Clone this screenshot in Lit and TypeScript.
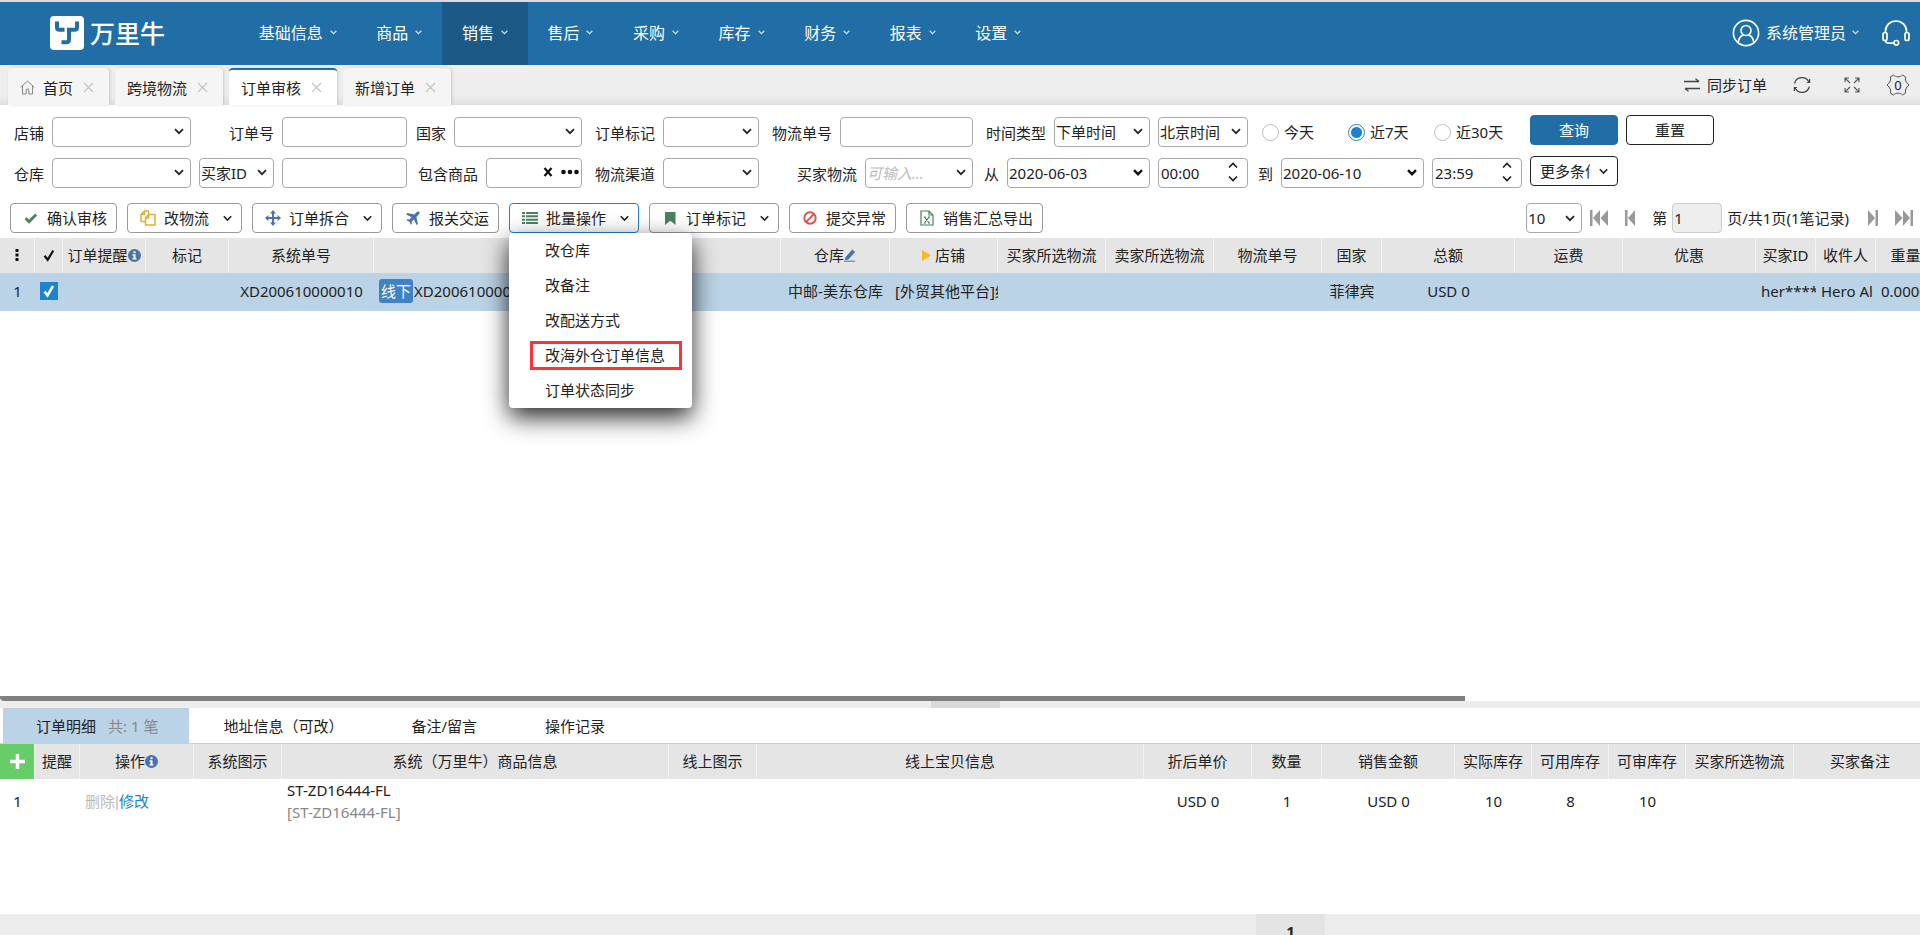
import { LitElement, html, css, svg, nothing, unsafeCSS } from "lit";
import { customElement, property } from "lit/decorators.js";
import { classMap } from "lit/directives/class-map.js";
import { styleMap } from "lit/directives/style-map.js";

const chevronImage = (stroke: string, weight: number) =>
  unsafeCSS(
    `url("data:image/svg+xml,${encodeURIComponent(
      `<svg xmlns='http://www.w3.org/2000/svg' width='10' height='7' viewBox='0 0 10 7'><path d='M1 1.2l4 4 4-4' fill='none' stroke='${stroke}' stroke-width='${weight}'/></svg>`
    )}")`
  );

const spinImage = unsafeCSS(
  `url("data:image/svg+xml,${encodeURIComponent(
    `<svg xmlns='http://www.w3.org/2000/svg' width='10' height='20' viewBox='0 0 10 20'><path d='M1 5.5l4-4 4 4M1 14.5l4 4 4-4' fill='none' stroke='#222' stroke-width='1.7'/></svg>`
  )}")`
);

const icons: Record<string, unknown> = {
  check: svg`<svg width="16" height="16" viewBox="0 0 16 16"><path d="M2.5 8.2l3.6 3.6 7-7.3" fill="none" stroke="#4c8161" stroke-width="2.8"/></svg>`,
  copy: svg`<svg width="16" height="16" viewBox="0 0 16 16"><path d="M4.5 1h4v3M1 4.600L4.500 1v3.600H1v6.900h4.500M8.500 4.500H15V15H5.500V8zM8.500 4.500V8h-3M8.500 1v2" fill="none" stroke="#dfae35" stroke-width="1.500" stroke-linejoin="round"/></svg>`,
  move: svg`<svg width="16" height="16" viewBox="0 0 16 16"><path d="M8 0l3 3.400H9v3.600h3.600V5L16 8l-3.400 3V9H9v3.600h2L8 16l-3-3.400h2V9H3.400v2L0 8l3.400-3v2H7V3.400H5z" fill="#4a72b0"/></svg>`,
  plane: svg`<svg width="16" height="16" viewBox="0 0 16 16"><path d="M14.200 1.800c.7.700.3 2-.5 2.800L11.400 7l1.500 7-1.300 1.100-2.700-5.500-2.300 2.200.4 2-1 1-1.600-3-3-1.600 1-1 2 .4 2.200-2.300L1.200 4.400 2.300 3l7 1.500 2.300-2.300c.8-.8 2-1.100 2.600-.4z" fill="#4a72b0"/></svg>`,
  list: svg`<svg width="16" height="16" viewBox="0 0 16 16"><path d="M0 2h3v2H0zM4 2h12v2H4zM0 5.300h3v2H0zM4 5.300h12v2H4zM0 8.700h3v2H0zM4 8.700h12v2H4zM0 12h3v2H0zM4 12h12v2H4z" fill="#4c8161"/></svg>`,
  bookmark: svg`<svg width="16" height="16" viewBox="0 0 16 16"><path d="M3 2h10.500v13l-5.200-4.300L3 15z" fill="#4c8161"/></svg>`,
  ban: svg`<svg width="16" height="16" viewBox="0 0 16 16"><circle cx="8" cy="8" r="5.700" fill="none" stroke="#d9534a" stroke-width="1.900"/><path d="M4.200 11.800l7.600-7.600" stroke="#d9534a" stroke-width="1.900"/></svg>`,
  excel: svg`<svg width="16" height="16" viewBox="0 0 16 16"><path d="M2 1h8l4 4v10H2zM10 1v4h4M5.500 7l4.600 6M10.100 7l-4.600 6M4.700 7h2M9 7h2M4.700 13h2M9 13h2" fill="none" stroke="#4c8161" stroke-width="1.200"/></svg>`,
  info: svg`<svg width="13" height="13" viewBox="0 0 13 13"><circle cx="6.500" cy="6.500" r="6.500" fill="#4a72b0"/><path d="M5.500 2.200h2v2h-2zM4.500 5.200h3v4h1v1.400h-4V9.200h1V6.600h-1z" fill="#fff"/></svg>`,
  pen: svg`<svg width="12" height="14" viewBox="0 0 12 14"><path d="M1.500 9.200L8.300 1.500l2.800 2.500-6.700 7.500-3.400.8z" fill="#4a72b0"/><path d="M0 13.200h11" stroke="#4a72b0" stroke-width="1"/></svg>`,
  triangle: svg`<svg width="9" height="11" viewBox="0 0 9 11"><path d="M0 0l9 5.500L0 11z" fill="#fbb829"/></svg>`,
  tick: svg`<svg width="12" height="13" viewBox="0 0 12 13"><path d="M1.500 6.800l3.200 4 5.600-9.300" fill="none" stroke="#111" stroke-width="2.200"/></svg>`,
  dots: svg`<svg width="4" height="14" viewBox="0 0 4 14"><path d="M.5 1h3v3h-3zM.5 5.500h3v3h-3zM.5 10h3v3h-3z" fill="#111"/></svg>`,
  home: svg`<svg width="15" height="15" viewBox="0 0 15 15"><path d="M.7 7.300L7.500 1l6.800 6.300M2.500 6v8h3.700V9.200h2.600V14h3.700V6" fill="none" stroke="#888"/></svg>`,
  close: svg`<svg width="11" height="11" viewBox="0 0 11 11"><path d="M1 1l9 9M10 1l-9 9" stroke="#c4c4c4" stroke-width="1.200"/></svg>`,
  swap: svg`<svg width="16" height="14" viewBox="0 0 16 14"><path d="M0 3.500h15M11.500.8l3.500 2.700M16 10.500H1M4.500 13.200L1 10.500" fill="none" stroke="#444" stroke-width="1.300"/></svg>`,
  refresh: svg`<svg width="18" height="18" viewBox="0 0 18 18"><path d="M1.600 7.500A7.600 7.600 0 0 1 16 6.200M16.400 10.500A7.600 7.600 0 0 1 2 11.800M16.600 3v3.500h-2.500M1.400 15v-3.500h2.500" fill="none" stroke="#444" stroke-width="1.200"/></svg>`,
  expand: svg`<svg width="16" height="16" viewBox="0 0 16 16"><path d="M6 6L1 1M1 5V1h4M10 6l5-5M11 1h4v4M6 10l-5 5M1 11v4h4M10 10l5 5M15 11v4h-4" fill="none" stroke="#555" stroke-width="1.100"/></svg>`,
  user: svg`<svg width="28" height="28" viewBox="0 0 28 28"><g fill="none" stroke="#fff" stroke-width="1.600"><circle cx="14" cy="14" r="12.600"/><circle cx="14" cy="11.500" r="5"/><path d="M6.200 23.500c.6-4.600 3-7 5.600-7.600M21.800 23.500c-.6-4.600-3-7-5.600-7.600"/></g></svg>`,
  headset: svg`<svg width="28" height="26" viewBox="0 0 28 26"><g fill="none" stroke="#fff" stroke-width="1.700"><path d="M3.500 13V11a10.500 10 0 0 1 21 0v2"/><rect x="1" y="12.500" width="4" height="8" rx="2"/><rect x="23" y="12.500" width="4" height="8" rx="2"/><path d="M3.500 20.500c0 2.300 2 2.700 4 2.700h4.500"/><circle cx="14.300" cy="22.800" r="2.300"/></g></svg>`,
  logo: svg`<svg width="34" height="34" viewBox="0 0 34 34"><rect width="34" height="34" rx="4" fill="#fff"/><path d="M7 5.500V11.500Q7 13.800 9.500 13.800H14.500M27 5.500V11.500Q27 13.800 24.500 13.800H19V23.500Q19 26.200 16.500 26.200H11.500" fill="none" stroke="#216da6" stroke-width="4"/></svg>`,
  first: svg`<svg width="18" height="16" viewBox="0 0 18 16"><path d="M0 0h2.500v16H0zM10 0v16L3 8zM18 0v16l-7.500-8z" fill="#999"/></svg>`,
  prev: svg`<svg width="10" height="16" viewBox="0 0 10 16"><path d="M0 0h2.500v16H0zM10 0v16L3 8z" fill="#999"/></svg>`,
  next: svg`<svg width="10" height="16" viewBox="0 0 10 16"><path d="M7.500 0H10v16H7.500zM0 0v16l7-8z" fill="#999"/></svg>`,
  last: svg`<svg width="18" height="16" viewBox="0 0 18 16"><path d="M15.500 0H18v16h-2.500zM8 0v16l7-8zM0 0v16l7.500-8z" fill="#999"/></svg>`,
  plus: svg`<svg width="17" height="17" viewBox="0 0 17 17"><path d="M8.500 1v15M1 8.500h15" stroke="#fff" stroke-width="3.500"/></svg>`,
};

const chevron = (size: number, width: number) =>
  svg`<svg width=${size} height="7" viewBox="0 0 9 7"><path d="M.8 1.200l3.700 3.800 3.700-3.800" fill="none" stroke="currentColor" stroke-width=${width}/></svg>`;

const sharedText = css`
  :host {
    font-family: "Noto Sans", "Noto Sans CJK SC", sans-serif;
    font-size: 15px;
    line-height: 22px;
    color: #222;
  }
  * {
    box-sizing: border-box;
  }
  button,
  input,
  select {
    font: inherit;
    color: inherit;
    margin: 0;
  }
  button {
    padding: 0;
    border: 0;
    background: none;
    cursor: pointer;
  }
  svg {
    display: block;
    flex: none;
  }
`;

@customElement("top-nav")
class TopNav extends LitElement {
  static styles = [
    sharedText,
    css`
      :host {
        display: flex;
        align-items: stretch;
        height: 65px;
        border-top: 2px solid #d9dde3;
        background: #216da6;
        color: #fff;
        font-size: 16px;
      }
      .brand {
        display: flex;
        align-items: center;
        gap: 6px;
        width: 239px;
        padding-left: 50px;
        padding-bottom: 1px;
        font-size: 25px;
        font-weight: 500;
      }
      nav {
        display: flex;
        width: 802px;
      }
      .item {
        flex: 1 1 auto;
        display: flex;
        align-items: center;
        justify-content: center;
        gap: 7px;
        padding: 0 19px 2px;
        color: #fff;
        text-decoration: none;
        white-space: nowrap;
      }
      .current {
        background: #1c5985;
      }
      .item svg,
      .account svg:last-child {
        opacity: 0.8;
      }
      .side {
        display: flex;
        align-items: center;
        gap: 23px;
        margin-left: auto;
        padding: 0 10px 2px 0;
      }
      .account {
        display: flex;
        align-items: center;
        gap: 6px;
      }
    `,
  ];
  render() {
    const items = ["基础信息", "商品", "销售", "售后", "采购", "库存", "财务", "报表", "设置"];
    return html`
      <div class="brand">${icons.logo}<span>万里牛</span></div>
      <nav>
        ${items.map(
          (name) => html`<a href="#" class=${classMap({ item: true, current: name === "销售" })}>${name}${chevron(7, 1.6)}</a>`
        )}
      </nav>
      <div class="side">
        <button class="account">${icons.user}<span>系统管理员</span>${chevron(7, 1.6)}</button>
        <button aria-label="客服">${icons.headset}</button>
      </div>
    `;
  }
}

@customElement("page-tabs")
class PageTabs extends LitElement {
  static styles = [
    sharedText,
    css`
      :host {
        display: flex;
        justify-content: space-between;
        height: 40px;
        padding: 3px 10px 0 8px;
        background: linear-gradient(#eeeeee 75%, #e0e0e0);
      }
      .tabs {
        display: flex;
        gap: 6px;
      }
      .tab {
        display: flex;
        align-items: center;
        gap: 10px;
        padding: 2px 15px 0 12px;
        border-radius: 4px 4px 0 0;
        background: #f5f5f5;
        box-shadow: 1px 0 3px rgba(0, 0, 0, 0.15);
      }
      .current {
        padding-top: 0;
        border-top: 2px solid #216da6;
        background: #fff;
      }
      .label {
        display: flex;
        align-items: center;
        gap: 8px;
      }
      .tools {
        display: flex;
        align-items: center;
        gap: 26px;
        padding-bottom: 3px;
      }
      .sync {
        display: flex;
        align-items: center;
        gap: 7px;
      }
      .full {
        margin-left: 7px;
      }
      .gear {
        display: grid;
        place-items: center;
      }
      .gear svg,
      .gear span {
        grid-area: 1 / 1;
      }
      .gear span {
        font-size: 13px;
      }
    `,
  ];
  render() {
    const tabs = ["首页", "跨境物流", "订单审核", "新增订单"];
    return html`
      <div class="tabs" role="tablist">
        ${tabs.map(
          (name, i) => html`<div class=${classMap({ tab: true, current: name === "订单审核" })} role="tab">
            <span class="label">${i === 0 ? icons.home : nothing}${name}</span>
            <button aria-label="关闭">${icons.close}</button>
          </div>`
        )}
      </div>
      <div class="tools">
        <button class="sync">${icons.swap}<span>同步订单</span></button>
        <button aria-label="刷新">${icons.refresh}</button>
        <button class="full" aria-label="全屏">${icons.expand}</button>
        <button class="gear" aria-label="设置">
          <svg width="24" height="22" viewBox="0 0 24 22">
            <path
              d="M7.500 1c2 2.400 7 2.400 9 0l3.200 2c-1 2.600.2 5.400 3.300 8-3.100 2.600-4.300 5.400-3.300 8l-3.200 2c-2-2.400-7-2.400-9 0l-3.200-2c1-2.600-.2-5.400-3.300-8 3.100-2.600 4.300-5.400 3.300-8z"
              fill="none"
              stroke="#555"
              stroke-linejoin="round"
            /></svg
          ><span>0</span>
        </button>
      </div>
    `;
  }
}

@customElement("order-filter")
class OrderFilter extends LitElement {
  static styles = [
    sharedText,
    css`
      :host {
        display: flex;
        gap: 8px;
        padding: 0 14px 15px;
      }
      .fields {
        display: grid;
        grid-template-columns: 177px 216px 175px 177px 214px 177px 98px 274px;
        grid-auto-rows: 30px;
        row-gap: 11px;
        padding-top: 12px;
      }
      .field {
        display: flex;
        align-items: center;
        justify-content: flex-end;
        gap: 8px;
        white-space: nowrap;
      }
      label,
      .caption {
        padding-top: 1px;
      }
      .box {
        height: 30px;
        padding: 0 2px 0 1px;
        border: 1px solid #aaa;
        border-radius: 4px;
        background: #fff;
        outline: none;
      }
      select.box,
      .date {
        appearance: none;
        padding-right: 18px;
        background: #fff ${chevronImage("#222", 1.7)} no-repeat right 6px top 10px;
      }
      .date {
        background-image: ${chevronImage("#111", 2.4)};
      }
      .time {
        padding-left: 2px;
        background: #fff ${spinImage} no-repeat right 9px top 3px;
      }
      .hint {
        color: #bbb;
        font-style: italic;
      }
      .w75 { width: 75px; }
      .w90 { width: 90px; }
      .w96 { width: 96px; }
      .w108 { width: 108px; }
      .w125 { width: 125px; }
      .w128 { width: 128px; }
      .w133 { width: 133px; }
      .w140 { width: 140px; }
      .w143 { width: 143px; }
      .goods {
        display: flex;
        align-items: center;
        gap: 7px;
        padding: 0 1px 2px 0;
      }
      .goods input {
        flex: 1;
        min-width: 0;
        border: 0;
        padding: 0;
        outline: none;
        background: none;
      }
      .radios {
        display: flex;
        align-items: center;
        padding-left: 14px;
      }
      .radios label {
        display: flex;
        align-items: center;
        gap: 5px;
        width: 86px;
        padding: 0;
      }
      .radios input {
        appearance: none;
        width: 17px;
        height: 17px;
        border: 1px solid #bbb;
        border-radius: 50%;
      }
      .radios input:checked {
        border-color: #1c84cc;
        background: radial-gradient(circle, #1c84cc 5px, #fff 6px);
      }
      .buttons {
        display: grid;
        grid-template-columns: 88px 88px;
        grid-auto-rows: 30px;
        gap: 11px 8px;
        padding-top: 10px;
      }
      .buttons button {
        border: 1px solid #222;
        border-radius: 4px;
      }
      .buttons .primary {
        border-color: #216da6;
        background: #216da6;
        color: #fff;
      }
      .more {
        display: flex;
        align-items: center;
        gap: 9px;
        padding: 0 9px;
      }
      .more span {
        width: 50px;
        overflow: hidden;
        white-space: nowrap;
        text-align: left;
      }
    `,
  ];

  private choice(id: string, label: string, width: string, value = "", extra = "") {
    return html`<div class="field">
      ${label ? html`<label for=${id}>${label}</label>` : nothing}
      <select id=${id} class="box ${width} ${extra}" aria-label=${label || value}>
        <option>${value}</option>
      </select>
    </div>`;
  }

  private entry(id: string, label: string, width: string, value = "", extra = "") {
    return html`<div class="field">
      ${label ? html`<label for=${id}>${label}</label>` : nothing}
      <input id=${id} class="box ${width} ${extra}" aria-label=${label || "时间"} .value=${value} />
    </div>`;
  }

  render() {
    return html`
      <div class="fields">
        ${this.choice("shop", "店铺", "w140")} ${this.entry("order-no", "订单号", "w125")}
        ${this.choice("country", "国家", "w128")} ${this.choice("mark", "订单标记", "w96")}
        ${this.entry("tracking", "物流单号", "w133")} ${this.choice("time-kind", "时间类型", "w96", "下单时间")}
        ${this.choice("zone", "", "w90", "北京时间")}
        <div class="radios">
          <label><input type="radio" name="range" />今天</label>
          <label><input type="radio" name="range" checked />近7天</label>
          <label><input type="radio" name="range" />近30天</label>
        </div>
        ${this.choice("depot", "仓库", "w140")}
        <div class="field">
          <select class="box w75" aria-label="买家字段"><option>买家ID</option></select>
          <input class="box w125" aria-label="买家ID" />
        </div>
        <div class="field">
          <label for="goods">包含商品</label>
          <div class="box w96 goods">
            <input id="goods" />
            <button aria-label="清除">
              <svg width="10" height="10" viewBox="0 0 10 10"><path d="M1.500 1l7 8M8.500 1l-7 8" stroke="#111" stroke-width="2.200" /></svg>
            </button>
            <button aria-label="选择商品">
              <svg width="20" height="6" viewBox="0 0 20 6"><g fill="#111"><circle cx="3.500" cy="3" r="2.300" /><circle cx="10" cy="3" r="2.300" /><circle cx="16.500" cy="3" r="2.300" /></g></svg>
            </button>
          </div>
        </div>
        ${this.choice("channel", "物流渠道", "w96")}
        ${this.choice("carrier", "买家物流", "w108", "可输入...", "hint")}
        ${this.entry("from-date", "从", "w143", "2020-06-03", "date")}
        ${this.entry("from-time", "", "w90", "00:00", "time")}
        <div class="field">
          <label for="to-date">到</label>
          <input id="to-date" class="box w143 date" .value=${"2020-06-10"} />
          <input class="box w90 time" aria-label="结束时间" .value=${"23:59"} />
        </div>
      </div>
      <div class="buttons">
        <button class="primary">查询</button>
        <button>重置</button>
        <button class="more"><span>更多条件</span>${chevron(9, 1.6)}</button>
      </div>
    `;
  }
}

@customElement("order-toolbar")
class OrderToolbar extends LitElement {
  static styles = [
    sharedText,
    css`
      :host {
        display: flex;
        justify-content: space-between;
        height: 35px;
        padding: 0 7px 0 10px;
      }
      .actions {
        display: flex;
        gap: 10px;
      }
      .action {
        position: relative;
      }
      .trigger {
        display: flex;
        align-items: center;
        gap: 8px;
        height: 30px;
        padding: 0 9px 0 12px;
        border: 1px solid #999;
        border-radius: 4px;
        white-space: nowrap;
        background: #fff;
      }
      .caret {
        padding-left: 6px;
      }
      .open {
        border-color: #1c84cc;
      }
      .menu {
        position: absolute;
        z-index: 5;
        top: 30px;
        left: 0;
        width: 183px;
        margin: 0;
        padding: 0;
        list-style: none;
        border-radius: 4px;
        background: #fff;
        box-shadow: 0 9px 24px rgba(0, 0, 0, 0.85);
      }
      .menu li {
        display: flex;
        align-items: center;
        height: 35px;
        padding: 0 10px 0 21px;
      }
      .menu button {
        flex: 1;
        height: 29px;
        padding: 0 12px 2px;
        border: 3px solid transparent;
        text-align: left;
        white-space: nowrap;
      }
      .menu .flagged {
        border-color: #f53636;
      }
      .pager {
        display: flex;
        align-items: center;
        height: 30px;
        gap: 17px;
        white-space: nowrap;
      }
      .pager select,
      .pager input {
        height: 30px;
        padding: 0 2px 0 1px;
        border: 1px solid #aaa;
        border-radius: 4px;
      }
      .pager select {
        appearance: none;
        width: 56px;
        margin-right: -9px;
        background: #fff ${chevronImage("#222", 1.7)} no-repeat right 6px top 11px;
      }
      .pager input {
        width: 50px;
        border-color: #ccc;
        background: #eee;
      }
      .page {
        display: flex;
        align-items: center;
        gap: 5px;
        padding-right: 2px;
      }
    `,
  ];
  render() {
    const actions: [string, string, boolean][] = [
      ["check", "确认审核", false],
      ["copy", "改物流", true],
      ["move", "订单拆合", true],
      ["plane", "报关交运", false],
      ["list", "批量操作", true],
      ["bookmark", "订单标记", true],
      ["ban", "提交异常", false],
      ["excel", "销售汇总导出", false],
    ];
    const menu = ["改仓库", "改备注", "改配送方式", "改海外仓订单信息", "订单状态同步"];
    return html`
      <div class="actions">
        ${actions.map(
          ([icon, name, drop]) => html`<div class="action">
            <button class=${classMap({ trigger: true, open: icon === "list" })}>
              ${icons[icon]}<span>${name}</span>${drop ? html`<span class="caret">${chevron(9, 1.6)}</span>` : nothing}
            </button>
            ${icon === "list"
              ? html`<ul class="menu">
                  ${menu.map((m) => html`<li><button class=${classMap({ flagged: m === "改海外仓订单信息" })}>${m}</button></li>`)}
                </ul>`
              : nothing}
          </div>`
        )}
      </div>
      <div class="pager">
        <select aria-label="每页条数"><option>10</option></select>
        <button aria-label="首页">${icons.first}</button>
        <button aria-label="上一页">${icons.prev}</button>
        <span class="page"><label for="page">第</label><input id="page" .value=${"1"} />页/共1页(1笔记录)</span>
        <button aria-label="下一页">${icons.next}</button>
        <button aria-label="末页">${icons.last}</button>
      </div>
    `;
  }
}

interface Column {
  width: number;
  head?: unknown;
  cell?: unknown;
  left?: boolean;
  add?: boolean;
}

@customElement("data-grid")
class DataGrid extends LitElement {
  static styles = [
    sharedText,
    css`
      :host {
        display: block;
        overflow: hidden;
      }
      table {
        table-layout: fixed;
        border-collapse: separate;
        border-spacing: 0;
      }
      th,
      td {
        padding: 0 4px 1px;
        overflow: hidden;
        white-space: nowrap;
        font-weight: 400;
        text-align: center;
      }
      th {
        height: 35px;
        border-right: 1px solid #f4f4f4;
        background: #e5e5e5;
      }
      td {
        height: 38px;
        padding-bottom: 2px;
      }
      .tall td {
        height: 46px;
      }
      .left {
        padding-left: 5px;
        padding-right: 0;
        text-align: left;
      }
      .picked td {
        background: #bbd3e6;
      }
      .with-icon {
        display: flex;
        align-items: center;
        justify-content: center;
      }
      .pad-icon {
        gap: 4px;
      }
      .add {
        padding: 0;
        background: #67cd67;
      }
      .add button {
        display: grid;
        place-items: center;
        width: 100%;
        height: 34px;
      }
      .pick {
        appearance: none;
        display: block;
        width: 18px;
        height: 18px;
        margin: 0 auto;
        background: #1c84cc
          url("data:image/svg+xml,%3Csvg xmlns='http://www.w3.org/2000/svg' viewBox='0 0 18 18'%3E%3Cpath d='M4.500 9.500l3 4 5.500-9.500' fill='none' stroke='white' stroke-width='2.500'/%3E%3C/svg%3E");
      }
      .badge {
        display: inline-block;
        height: 24px;
        margin-right: 1px;
        padding: 0 2px;
        border-radius: 3px;
        background: #3f82c8;
        color: #fff;
        line-height: 24px;
      }
      .muted {
        color: #888;
      }
      .off {
        color: #bbb;
      }
      .bar {
        font-family: "Liberation Sans", sans-serif;
      }
      .link {
        color: #1c84cc;
        text-decoration: none;
      }
    `,
  ];
  @property({ attribute: false }) columns: Column[] = [];
  @property({ type: Boolean }) picked = false;

  render() {
    const total = this.columns.reduce((sum, c) => sum + c.width, 0);
    return html`<table style=${styleMap({ width: `${total}px` })}>
      <colgroup>
        ${this.columns.map((c) => html`<col style=${styleMap({ width: `${c.width}px` })} />`)}
      </colgroup>
      <thead>
        <tr>
          ${this.columns.map((c) => html`<th class=${classMap({ add: !!c.add })}>${c.head}</th>`)}
        </tr>
      </thead>
      <tbody>
        <tr class=${this.picked ? "picked" : "tall"}>
          ${this.columns.map((c) => html`<td class=${classMap({ left: !!c.left })}>${c.cell}</td>`)}
        </tr>
      </tbody>
    </table>`;
  }
}

const orderColumns: Column[] = [
  { width: 35, head: html`<span class="with-icon">${icons.dots}</span>`, cell: "1" },
  {
    width: 28,
    head: html`<span class="with-icon">${icons.tick}</span>`,
    cell: html`<input type="checkbox" class="pick" aria-label="选择订单" checked />`,
  },
  { width: 83, head: html`<span class="with-icon">订单提醒${icons.info}</span>` },
  { width: 83, head: "标记" },
  { width: 145, head: "系统单号", cell: "XD200610000010" },
  { width: 407, left: true, cell: html`<span class="badge">线下</span>XD200610000010` },
  { width: 109, head: html`<span class="with-icon">仓库${icons.pen}</span>`, cell: "中邮-美东仓库" },
  {
    width: 108,
    head: html`<span class="with-icon pad-icon">${icons.triangle}店铺</span>`,
    cell: "[外贸其他平台]线",
    left: true,
  },
  { width: 108, head: "买家所选物流" },
  { width: 108, head: "卖家所选物流" },
  { width: 108, head: "物流单号" },
  { width: 60, head: "国家", cell: "菲律宾" },
  { width: 133, head: "总额", cell: "USD 0" },
  { width: 108, head: "运费" },
  { width: 133, head: "优惠" },
  { width: 60, head: "买家ID", cell: "her****c", left: true },
  { width: 60, head: "收件人", cell: "Hero Al", left: true },
  { width: 60, head: "重量", cell: "0.0000", left: true },
];

const detailColumns: Column[] = [
  { width: 35, head: html`<button aria-label="新增明细">${icons.plus}</button>`, cell: "1", add: true },
  { width: 45, head: "提醒" },
  {
    width: 114,
    head: html`<span class="with-icon">操作${icons.info}</span>`,
    cell: html`<span class="off">删除<span class="bar">|</span></span><a class="link" href="#">修改</a>`,
    left: true,
  },
  { width: 88, head: "系统图示" },
  {
    width: 387,
    head: "系统（万里牛）商品信息",
    cell: html`ST-ZD16444-FL<br /><span class="muted">[ST-ZD16444-FL]</span>`,
    left: true,
  },
  { width: 88, head: "线上图示" },
  { width: 387, head: "线上宝贝信息" },
  { width: 108, head: "折后单价", cell: "USD 0" },
  { width: 70, head: "数量", cell: "1" },
  { width: 133, head: "销售金额", cell: "USD 0" },
  { width: 77, head: "实际库存", cell: "10" },
  { width: 77, head: "可用库存", cell: "8" },
  { width: 77, head: "可审库存", cell: "10" },
  { width: 108, head: "买家所选物流" },
  { width: 133, head: "买家备注" },
];

@customElement("app-root")
class AppRoot extends LitElement {
  static styles = [
    sharedText,
    css`
      :host {
        display: flex;
        flex-direction: column;
        height: 100vh;
        overflow: hidden;
        background: #fff;
      }
      .orders {
        flex: 1;
        min-height: 100px;
        display: flex;
        flex-direction: column;
        justify-content: space-between;
      }
      .scroll {
        width: 76.3%;
        height: 5px;
        border-radius: 0 0 0 4px;
        background: #808080;
      }
      .splitter {
        height: 7px;
        padding-left: 10px;
        background: #ededed;
      }
      .grip {
        width: 69px;
        height: 7px;
        margin: 0 auto;
        background: #d9d9d9;
      }
      .tabs {
        display: flex;
        height: 36px;
        padding-left: 3px;
        border-bottom: 1px solid #bbd3e6;
      }
      .tab {
        display: flex;
        align-items: center;
        gap: 12px;
        padding: 0 34px;
        border: 0;
        background: none;
        font: inherit;
        color: inherit;
        white-space: nowrap;
      }
      .current {
        padding: 0 31px 0 33px;
        background: #bbd3e6;
      }
      .count {
        color: #888;
      }
      .detail {
        height: 170px;
      }
      .totals {
        display: flex;
        height: 21px;
        padding-left: 1256px;
        overflow: hidden;
        background: #ededed;
      }
      .total {
        width: 69px;
        padding-top: 6px;
        background: #e4e4e4;
        font-weight: 700;
        text-align: center;
      }
    `,
  ];
  render() {
    return html`
      <top-nav></top-nav>
      <page-tabs></page-tabs>
      <order-filter></order-filter>
      <order-toolbar></order-toolbar>
      <section class="orders">
        <data-grid picked .columns=${orderColumns}></data-grid>
        <div class="scroll"></div>
      </section>
      <div class="splitter"><div class="grip"></div></div>
      <div class="tabs" role="tablist">
        <button class="tab current" role="tab"><span>订单明细</span><span class="count">共: 1 笔</span></button>
        <button class="tab" role="tab">地址信息（可改）</button>
        <button class="tab" role="tab">备注/留言</button>
        <button class="tab" role="tab">操作记录</button>
      </div>
      <data-grid class="detail" .columns=${detailColumns}></data-grid>
      <div class="totals"><span class="total">1</span></div>
    `;
  }
}
